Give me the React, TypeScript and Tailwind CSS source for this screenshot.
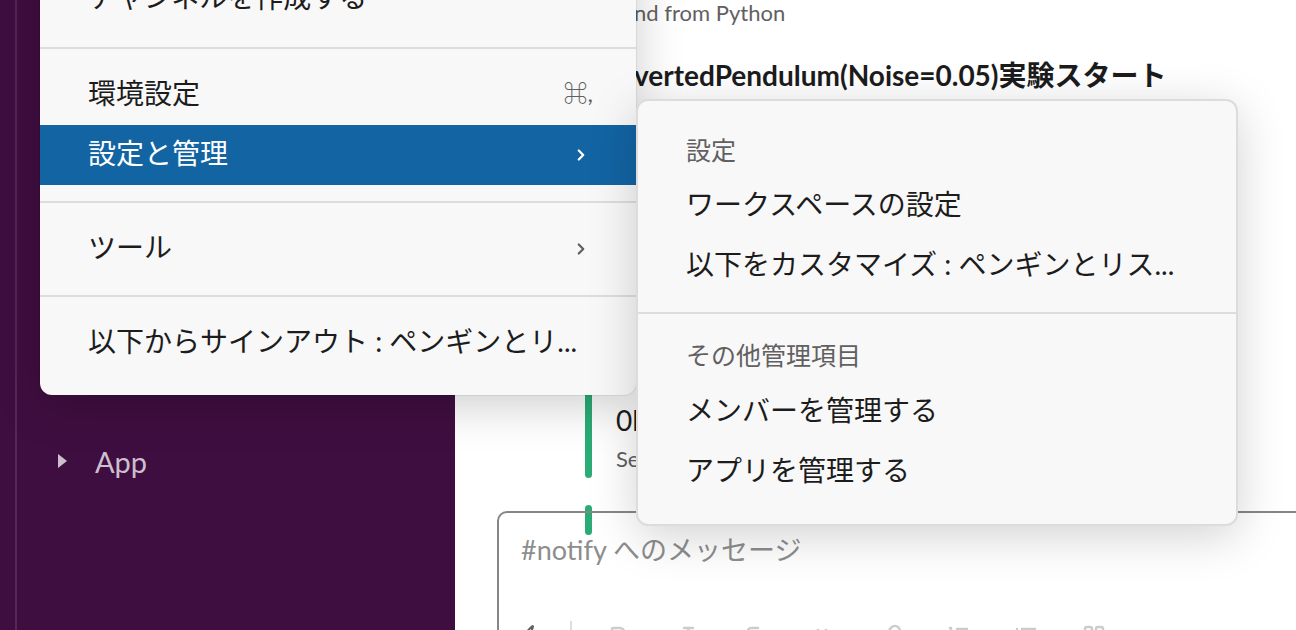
import React from 'react';
import { ChevronRight, Zap, Bold, Italic, Strikethrough, Code, Link, ListOrdered, List, Quote } from 'lucide-react';

interface MenuRow {
  label: string;
  hint?: string;
  sub?: boolean;
  active?: boolean;
}

const mainGroups: MenuRow[][] = [
  [{ label: 'チャンネルを作成する' }],
  [{ label: '環境設定', hint: '⌘,' }, { label: '設定と管理', sub: true, active: true }],
  [{ label: 'ツール', sub: true }],
  [{ label: '以下からサインアウト : ペンギンとリ...' }],
];

const Row = ({ row }: { row: MenuRow }) => (
  <div
    className={`flex items-center justify-between h-[60px] pl-[48px] pr-[50px] pb-[5px] text-[28px] ${
      row.active ? 'bg-[#1264a3] text-white' : 'text-[#1d1c1d]'
    }`}
  >
    <span className="whitespace-nowrap">{row.label}</span>
    {row.hint && <span className="text-[24px] text-[#616061] mr-[-7px]">{row.hint}</span>}
    {row.sub && (
      <ChevronRight
        className={`w-[18px] h-[18px] mr-[-4px] mt-[5px] ${row.active ? 'text-white' : 'text-[#616061]'}`}
        strokeWidth={3}
      />
    )}
  </div>
);

function MainMenu() {
  return (
    <div className="absolute left-[40px] top-[-48px] w-[596px] bg-[#f8f8f8] rounded-b-[12px] shadow-[0_0_0_1px_rgba(0,0,0,0.06),0_10px_48px_rgba(0,0,0,0.2)] z-20 pb-[6px]">
      {mainGroups.map((group, gi) => (
        <div key={gi}>
          {gi > 0 && <div className="h-[2px] bg-[#dddddd]" />}
          <div className={gi === 0 ? 'pt-[17px] pb-[18px]' : 'py-[16px]'}>
            {group.map(row => (
              <Row key={row.label} row={row} />
            ))}
          </div>
        </div>
      ))}
    </div>
  );
}

function SubMenu() {
  return (
    <div className="absolute left-[636px] top-[99px] w-[602px] h-[427px] bg-[#f8f8f8] rounded-[12px] border-2 border-[#dcdcdc] shadow-[0_10px_48px_rgba(0,0,0,0.18)] z-30">
      <div className="pt-[27px] pb-[18px]">
        <div className="h-[46px] flex items-center px-[48px] text-[25px] text-[#616061]">設定</div>
        <div className="h-[60px] flex items-center px-[48px] text-[28px] text-[#1d1c1d]">ワークスペースの設定</div>
        <div className="h-[60px] flex items-center px-[48px] text-[28px] text-[#1d1c1d] whitespace-nowrap">
          以下をカスタマイズ : ペンギンとリス...
        </div>
      </div>
      <div className="h-[2px] bg-[#dddddd]" />
      <div className="pt-[19px]">
        <div className="h-[46px] flex items-center px-[48px] text-[25px] text-[#616061]">その他管理項目</div>
        <div className="h-[60px] flex items-center px-[48px] text-[28px] text-[#1d1c1d] pt-[2px]">メンバーを管理する</div>
        <div className="h-[60px] flex items-center px-[48px] text-[28px] text-[#1d1c1d] pt-[2px]">アプリを管理する</div>
      </div>
    </div>
  );
}

function Sidebar() {
  return (
    <div className="w-[455px] shrink-0 bg-[#3f0e40] flex">
      <div className="w-[15px] shrink-0" />
      <div className="w-[2px] shrink-0 bg-[#532756]" />
      <div className="flex-1 flex flex-col pt-[442px]">
        <div className="flex items-center h-[40px] pl-[40px] text-[29px] text-[#cdbfcd]">
          <svg width="11" height="16" viewBox="0 0 11 16" className="mr-[27px] mt-[-2px]">
            <path d="M1 1 L10 8 L1 15 Z" fill="#cdbfcd" />
          </svg>
          <span>App</span>
        </div>
      </div>
    </div>
  );
}

function Composer() {
  const tools = [Bold, Italic, Strikethrough, Code, Link, ListOrdered, List, Quote];
  return (
    <div className="ml-[42px] mr-[-20px] mb-[-30px] h-[149px] shrink-0 border-2 border-[#868686] rounded-[10px] pl-[22px] pt-[19px]">
      <div className="text-[27px] text-[#8d8d8d] leading-[36px]">#notify へのメッセージ</div>
      <div className="flex items-center mt-[53px] h-[30px]">
        <Zap className="w-[24px] h-[24px] text-[#616061] ml-[-2px]" strokeWidth={2} />
        <div className="w-[2px] h-[30px] bg-[#dddddd] ml-[27px] mr-[34px]" />
        <div className="flex items-center gap-[44px]">
          {tools.map((Icon, i) => (
            <Icon key={i} className="w-[24px] h-[24px] text-[#cccccc]" strokeWidth={2.5} />
          ))}
        </div>
      </div>
    </div>
  );
}

function MainPane() {
  return (
    <div className="flex-1 bg-white flex flex-col overflow-hidden">
      <div className="pl-[179px] text-[22px] text-[#616061] leading-[26px] whitespace-nowrap">nd from Python</div>
      <div className="pl-[179px] mt-[31px] text-[28px] font-bold text-[#1d1c1d] leading-[36px] whitespace-nowrap">
        vertedPendulum(Noise=0.05)実験スタート
      </div>
      <div className="flex pl-[130px] mt-[287px]">
        <div className="w-[7px] h-[98px] rounded-full bg-[#2bac76]" />
        <div className="pl-[24px] flex flex-col">
          <div className="text-[28px] text-[#1d1c1d] leading-[36px] mt-[22px]">0l</div>
          <div className="text-[22px] text-[#616061] leading-[30px] mt-[6px]">Send from Python</div>
        </div>
      </div>
      <div className="pl-[130px] mt-[27px] h-0">
        <div className="w-[7px] h-[30px] rounded-full bg-[#2bac76]" />
      </div>
      <div className="flex-1" />
      <Composer />
    </div>
  );
}

export default function App() {
  return (
    <div className="relative w-[1296px] h-[630px] overflow-hidden flex font-[Lato,'Noto_Sans_CJK_JP',sans-serif]">
      <Sidebar />
      <MainPane />
      <MainMenu />
      <SubMenu />
    </div>
  );
}
